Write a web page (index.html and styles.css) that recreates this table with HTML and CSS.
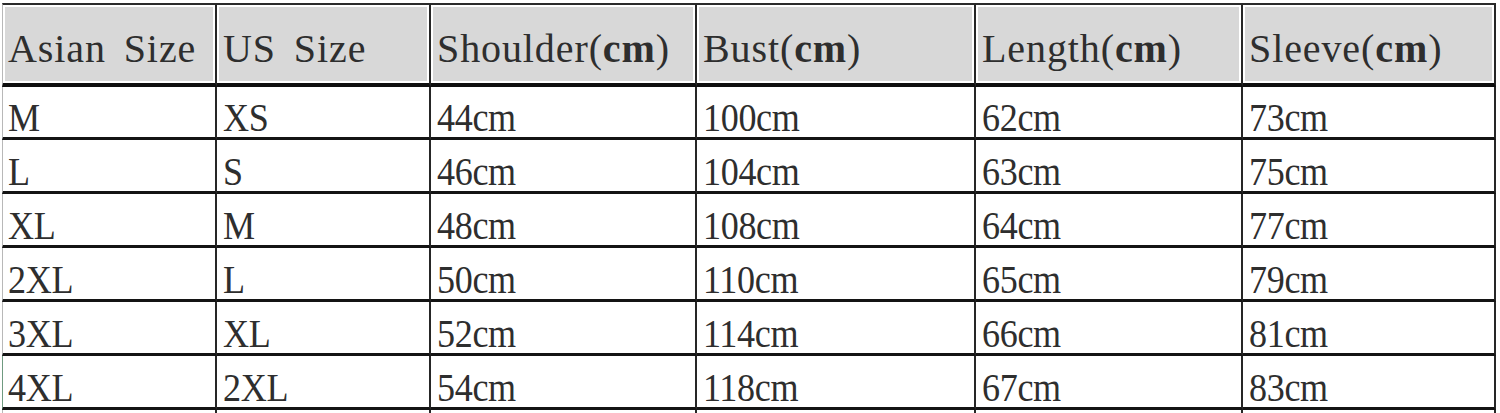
FILE: index.html
```html
<!DOCTYPE html>
<html>
<head>
<meta charset="utf-8">
<link rel="stylesheet" href="styles.css">
</head>
<body>
<div class="size-table">
  <div class="cell head"><span class="t">Asian Size</span></div>
  <div class="cell head"><span class="t">US Size</span></div>
  <div class="cell head"><span class="t">Shoulder(<b>cm</b>)</span></div>
  <div class="cell head"><span class="t">Bust(<b>cm</b>)</span></div>
  <div class="cell head"><span class="t">Length(<b>cm</b>)</span></div>
  <div class="cell head"><span class="t">Sleeve(<b>cm</b>)</span></div>

  <div class="cell"><span class="t">M</span></div>
  <div class="cell"><span class="t">XS</span></div>
  <div class="cell"><span class="t">44cm</span></div>
  <div class="cell"><span class="t">100cm</span></div>
  <div class="cell"><span class="t">62cm</span></div>
  <div class="cell"><span class="t">73cm</span></div>

  <div class="cell"><span class="t">L</span></div>
  <div class="cell"><span class="t">S</span></div>
  <div class="cell"><span class="t">46cm</span></div>
  <div class="cell"><span class="t">104cm</span></div>
  <div class="cell"><span class="t">63cm</span></div>
  <div class="cell"><span class="t">75cm</span></div>

  <div class="cell"><span class="t">XL</span></div>
  <div class="cell"><span class="t">M</span></div>
  <div class="cell"><span class="t">48cm</span></div>
  <div class="cell"><span class="t">108cm</span></div>
  <div class="cell"><span class="t">64cm</span></div>
  <div class="cell"><span class="t">77cm</span></div>

  <div class="cell"><span class="t">2XL</span></div>
  <div class="cell"><span class="t">L</span></div>
  <div class="cell"><span class="t">50cm</span></div>
  <div class="cell"><span class="t">110cm</span></div>
  <div class="cell"><span class="t">65cm</span></div>
  <div class="cell"><span class="t">79cm</span></div>

  <div class="cell"><span class="t">3XL</span></div>
  <div class="cell"><span class="t">XL</span></div>
  <div class="cell"><span class="t">52cm</span></div>
  <div class="cell"><span class="t">114cm</span></div>
  <div class="cell"><span class="t">66cm</span></div>
  <div class="cell"><span class="t">81cm</span></div>

  <div class="cell last"><span class="t">4XL</span></div>
  <div class="cell last"><span class="t">2XL</span></div>
  <div class="cell"><span class="t">54cm</span></div>
  <div class="cell"><span class="t">118cm</span></div>
  <div class="cell"><span class="t">67cm</span></div>
  <div class="cell"><span class="t">83cm</span></div>

  <div class="cell stub"></div>
  <div class="cell stub"></div>
  <div class="cell stub"></div>
  <div class="cell stub"></div>
  <div class="cell stub"></div>
  <div class="cell stub"></div>
</div>
</body>
</html>
```
FILE: styles.css
```css
html, body {
  margin: 0;
  padding: 0;
  background: #ffffff;
}

body {
  padding: 3px 0 0 2px;
  overflow: hidden;
  height: 413px;
  box-sizing: border-box;
}

.size-table {
  display: grid;
  grid-template-columns: 215px 214px 266px 279px 267px 253px;
  grid-template-rows: 84px 53px repeat(5, 54px) 20px;
  width: 1494px;
  font-family: "Liberation Serif", "Times New Roman", serif;
  font-size: 41px;
  color: #2e2e2e;
}

.cell {
  box-sizing: border-box;
  border-right: 2px solid #262626;
  border-bottom: 3px solid #141414;
  display: flex;
  align-items: flex-end;
  padding: 0 0 0 6px;
  background: #ffffff;
}

.cell:nth-child(6n+1) {
  border-left: 1px solid #b8b8b8;
  padding-left: 5px;
}

.cell .t {
  letter-spacing: -0.4px;
  transform: scaleX(0.88);
  transform-origin: 0 50%;
}

.head {
  border-top: 2px solid #2a2a2a;
  border-bottom: 4px solid #0e0e0e;
  background: #d8d8d8;
  box-shadow: inset 0 0 0 2px #ffffff;
  padding-bottom: 14px;
}

.head .t {
  font-size: 40px;
  letter-spacing: 0.9px;
  word-spacing: 7px;
  transform: none;
}

.cell.last {
  border-left-color: #6f9a80;
}

.stub {
  border-bottom: none;
}

.t {
  display: inline-block;
  line-height: 40px;
  white-space: pre;
}

.t b {
  font-weight: bold;
}
```
